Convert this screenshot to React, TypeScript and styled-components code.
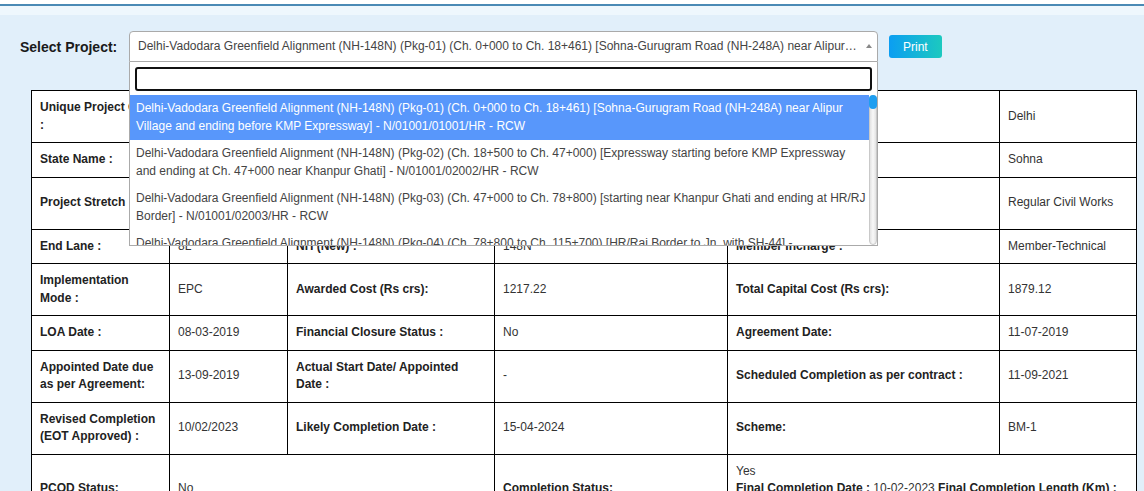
import styled, { createGlobalStyle } from 'styled-components';

const GlobalStyle = createGlobalStyle`
  html, body {
    margin: 0;
    padding: 0;
    background: #ffffff;
    font-family: "Liberation Sans", Arial, sans-serif;
  }
`;

const Page = styled.div`
  margin-top: 4px;
  border-top: 2px solid #4a8ab5;
  min-height: 485px;
  background: linear-gradient(to bottom, #eef7fd 0, #eef7fd 9px, #e1effa 9px);
`;

const Toolbar = styled.div`
  display: flex;
  align-items: center;
  padding: 25px 0 0 20px;
`;

const ToolbarLabel = styled.label`
  width: 109px;
  font-size: 14px;
  font-weight: bold;
  color: #1a1a1a;
`;

const SelectWrap = styled.div`
  position: relative;
  width: 749px;
`;

const SelectBox = styled.div`
  box-sizing: border-box;
  height: 31px;
  padding: 0 20px 0 8px;
  border: 1px solid #aaa;
  border-radius: 4px 4px 0 0;
  background: #fff;
  font-size: 12px;
  line-height: 29px;
  color: #444;
  white-space: nowrap;
  overflow: hidden;
  text-overflow: ellipsis;
`;

const Arrow = styled.span`
  position: absolute;
  right: 6px;
  top: 13px;
  width: 0;
  height: 0;
  border-style: solid;
  border-width: 0 3px 4px 3px;
  border-color: transparent transparent #888 transparent;
`;

const Dropdown = styled.div`
  position: absolute;
  top: 31px;
  left: 0;
  z-index: 10;
  box-sizing: border-box;
  width: 100%;
  background: #fff;
  border: 1px solid #aaa;
  border-top: none;
`;

const SearchRow = styled.div`
  padding: 5px 5px 4px;
`;

const SearchInput = styled.input`
  display: block;
  box-sizing: border-box;
  width: 100%;
  height: 24px;
  border: 2px solid #111;
  border-radius: 3px;
  outline: none;
  padding: 0 4px;
  font-family: inherit;
  font-size: 12px;
`;

const Results = styled.div`
  position: relative;
  height: 150px;
  overflow: hidden;
`;

const ResultList = styled.ul`
  list-style: none;
  margin: 0;
  padding: 0 8px 0 0;
`;

const ScrollTrack = styled.div`
  position: absolute;
  top: 0;
  right: 0;
  bottom: 0;
  width: 8px;
  box-sizing: border-box;
  border: 1px solid #c9c9c9;
  border-radius: 4px;
  background: linear-gradient(to right, #e2e2e2, #f8f8f8, #e2e2e2);
`;

const ScrollThumb = styled.div`
  position: absolute;
  top: -1px;
  left: -1px;
  right: -1px;
  height: 14px;
  border-radius: 4px;
  background: #1e9ef0;
`;

const Option = styled.li<{ $active?: boolean }>`
  padding: 4px 1px 5px 6px;
  font-size: 12px;
  line-height: 18px;
  color: ${props => (props.$active ? '#fff' : '#444')};
  background: ${props => (props.$active ? '#5897fb' : 'transparent')};
`;

const PrintButton = styled.button`
  margin-left: 11px;
  height: 23px;
  padding: 0 14px;
  border: none;
  border-radius: 3px;
  background: linear-gradient(to right, #0b9ef2, #1cc9bf);
  color: #fff;
  font-family: inherit;
  font-size: 12px;
  cursor: pointer;
`;

const DetailTable = styled.table`
  margin: 28px 8px 0 31px;
  width: 1105px;
  border-collapse: collapse;
  table-layout: fixed;
  background: #fff;
`;

const LabelCell = styled.th`
  border: 1px solid #000;
  padding: 8px;
  font-size: 12px;
  line-height: 17.5px;
  font-weight: bold;
  color: #222;
  text-align: left;
  vertical-align: middle;
`;

const ValueCell = styled.td`
  border: 1px solid #000;
  padding: 8px;
  font-size: 12px;
  line-height: 17.5px;
  color: #333;
  text-align: left;
  vertical-align: middle;
`;

const Strong = styled.b`
  color: #222;
`;

const options: string[] = [
  'Delhi-Vadodara Greenfield Alignment (NH-148N) (Pkg-01) (Ch. 0+000 to Ch. 18+461) [Sohna-Gurugram Road (NH-248A) near Alipur Village and ending before KMP Expressway] - N/01001/01001/HR - RCW',
  'Delhi-Vadodara Greenfield Alignment (NH-148N) (Pkg-02) (Ch. 18+500 to Ch. 47+000) [Expressway starting before KMP Expressway and ending at Ch. 47+000 near Khanpur Ghati] - N/01001/02002/HR - RCW',
  'Delhi-Vadodara Greenfield Alignment (NH-148N) (Pkg-03) (Ch. 47+000 to Ch. 78+800) [starting near Khanpur Ghati and ending at HR/RJ Border] - N/01001/02003/HR - RCW',
  'Delhi-Vadodara Greenfield Alignment (NH-148N) (Pkg-04) (Ch. 78+800 to Ch. 115+700) [HR/Raj Border to Jn. with SH-44] - N/01001/02004/RJ - RCW',
  'Delhi-Vadodara Greenfield Alignment (NH-148N) (Pkg-05) (Ch. 115+700 to Ch. 151+840) [Jn. with SH-44 to Jn. with SH-13] - N/01001/02005/RJ - RCW',
  'Delhi-Vadodara Greenfield Alignment (NH-148N) (Pkg-06) (Ch. 151+840 to Ch. 186+000) [Jn. with SH-13 to Jn. with NH-11A] - N/01001/02006/RJ - RCW',
];

const colWidths = [138, 118, 207, 233, 272, 137];

export default function App() {
  return (
    <>
      <GlobalStyle />
      <Page>
        <Toolbar>
          <ToolbarLabel>Select Project:</ToolbarLabel>
          <SelectWrap>
            <SelectBox>{options[0]}</SelectBox>
            <Arrow />
            <Dropdown>
              <SearchRow>
                <SearchInput type="search" />
              </SearchRow>
              <Results>
                <ResultList>
                  {options.map((text, i) => (
                    <Option key={i} $active={i === 0}>
                      {text}
                    </Option>
                  ))}
                </ResultList>
                <ScrollTrack>
                  <ScrollThumb />
                </ScrollTrack>
              </Results>
            </Dropdown>
          </SelectWrap>
          <PrintButton>Print</PrintButton>
        </Toolbar>

        <DetailTable>
          <colgroup>
            {colWidths.map((w, i) => (
              <col key={i} style={{ width: w }} />
            ))}
          </colgroup>
          <tbody>
            <tr>
              <LabelCell>Unique Project Code :</LabelCell>
              <ValueCell>N/01001/01001</ValueCell>
              <LabelCell>Project Name :</LabelCell>
              <ValueCell>NH-148N (Pkg-01)</ValueCell>
              <LabelCell>RO :</LabelCell>
              <ValueCell>Delhi</ValueCell>
            </tr>
            <tr>
              <LabelCell>State Name :</LabelCell>
              <ValueCell>Haryana</ValueCell>
              <LabelCell>District :</LabelCell>
              <ValueCell>Gurugram</ValueCell>
              <LabelCell>PIU :</LabelCell>
              <ValueCell>Sohna</ValueCell>
            </tr>
            <tr>
              <LabelCell>Project Stretch :</LabelCell>
              <ValueCell>Ch. 0+000 to Ch. 18+461</ValueCell>
              <LabelCell>Length (Km) :</LabelCell>
              <ValueCell>18.461</ValueCell>
              <LabelCell>Type of Work :</LabelCell>
              <ValueCell>Regular Civil Works</ValueCell>
            </tr>
            <tr>
              <LabelCell>End Lane :</LabelCell>
              <ValueCell>8L</ValueCell>
              <LabelCell>NH (New) :</LabelCell>
              <ValueCell>148N</ValueCell>
              <LabelCell>Member Incharge :</LabelCell>
              <ValueCell>Member-Technical</ValueCell>
            </tr>
            <tr>
              <LabelCell>Implementation Mode :</LabelCell>
              <ValueCell>EPC</ValueCell>
              <LabelCell>Awarded Cost (Rs crs):</LabelCell>
              <ValueCell>1217.22</ValueCell>
              <LabelCell>Total Capital Cost (Rs crs):</LabelCell>
              <ValueCell>1879.12</ValueCell>
            </tr>
            <tr>
              <LabelCell>LOA Date :</LabelCell>
              <ValueCell>08-03-2019</ValueCell>
              <LabelCell>Financial Closure Status :</LabelCell>
              <ValueCell>No</ValueCell>
              <LabelCell>Agreement Date:</LabelCell>
              <ValueCell>11-07-2019</ValueCell>
            </tr>
            <tr>
              <LabelCell>Appointed Date due as per Agreement:</LabelCell>
              <ValueCell>13-09-2019</ValueCell>
              <LabelCell>Actual Start Date/ Appointed Date :</LabelCell>
              <ValueCell>-</ValueCell>
              <LabelCell>Scheduled Completion as per contract :</LabelCell>
              <ValueCell>11-09-2021</ValueCell>
            </tr>
            <tr>
              <LabelCell>Revised Completion (EOT Approved) :</LabelCell>
              <ValueCell>10/02/2023</ValueCell>
              <LabelCell>Likely Completion Date :</LabelCell>
              <ValueCell>15-04-2024</ValueCell>
              <LabelCell>Scheme:</LabelCell>
              <ValueCell>BM-1</ValueCell>
            </tr>
            <tr>
              <LabelCell>PCOD Status:</LabelCell>
              <ValueCell colSpan={2}>No</ValueCell>
              <LabelCell>Completion Status:</LabelCell>
              <ValueCell colSpan={2}>
                Yes
                <br />
                <Strong>Final Completion Date :</Strong> 10-02-2023 <Strong>Final Completion Length (Km) :</Strong> 18.461
              </ValueCell>
            </tr>
          </tbody>
        </DetailTable>
      </Page>
    </>
  );
}
